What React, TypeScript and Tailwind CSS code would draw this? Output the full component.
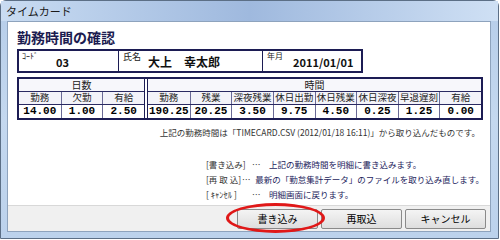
import React from 'react';

const jp = { fontFamily: '"Noto Sans CJK JP", "Noto Sans", sans-serif' };
const mono = { fontFamily: '"Liberation Mono", "Noto Sans CJK JP", monospace' };

const dayCols = [
  { label: '勤務', value: '14.00' },
  { label: '欠勤', value: '1.00' },
  { label: '有給', value: '2.50' },
];

const timeCols = [
  { label: '勤務', value: '190.25' },
  { label: '残業', value: '20.25' },
  { label: '深夜残業', value: '3.50' },
  { label: '休日出勤', value: '9.75' },
  { label: '休日残業', value: '4.50' },
  { label: '休日深夜', value: '0.25' },
  { label: '早退遅刻', value: '1.25' },
  { label: '有給', value: '0.00' },
];

const legend = [
  { key: '[書き込み]', text: '上記の勤務時間を明細に書き込みます。' },
  { key: '[再 取 込]', text: '最新の「勤怠集計データ」のファイルを取り込み直します。' },
  { key: '[ ｷｬﾝｾﾙ ]', text: '明細画面に戻ります。' },
];

const Block = ({ title, cols, grid }: { title: string; cols: { label: string; value: string }[]; grid: string }) => (
  <div className="flex flex-col h-full">
    <div className="h-[13px] shrink-0 flex items-center justify-center text-[10px] leading-none text-[#222] border-b border-[#2a2a62] bg-[#f7f7fb]">
      {title}
    </div>
    <div className={`grid ${grid} h-[13px] shrink-0 border-b border-[#2a2a62] bg-[#f3f3f9]`}>
      {cols.map((c, i) => (
        <div
          key={i}
          className={`flex items-center justify-center whitespace-nowrap text-[9.5px] leading-none text-[#222] ${i > 0 ? 'border-l border-[#6a6a96]' : ''}`}
        >
          {c.label}
        </div>
      ))}
    </div>
    <div className={`grid ${grid} flex-1`}>
      {cols.map((c, i) => (
        <div
          key={i}
          style={mono}
          className={`flex items-center justify-center text-[11px] font-bold leading-none text-black ${i > 0 ? 'border-l border-[#6a6a96]' : ''}`}
        >
          {c.value}
        </div>
      ))}
    </div>
  </div>
);

const Btn = ({ label }: { label: string }) => (
  <button className="w-[81px] h-[20px] rounded-[2px] border border-[#8a8a8a] bg-gradient-to-b from-[#f4f4f4] to-[#dedede] text-[10px] leading-none text-black">
    {label}
  </button>
);

const App = () => {
  return (
    <div style={jp} className="relative w-[500px] h-[240px] overflow-hidden bg-white">
      <div className="w-[499px] h-[239px] rounded-t-[6px] border border-[#5c6f86] bg-gradient-to-b from-[#b6cde9] via-[#c4d8ef] to-[#bcd2ec] flex flex-col">
        <div className="h-[20px] shrink-0 flex items-center px-[5px] bg-gradient-to-r from-[#c9dcf2] via-[#9fb9de] to-[#cfe0f4]">
          <span className="text-[11px] text-[#1a1a1a] leading-[14px]">タイムカード</span>
        </div>
        <div className="flex-1 min-h-0 ml-[6px] mr-[7px] mb-[6px] flex flex-col border border-[#8ea3bd] bg-white">
          <div className="flex-1 min-h-0 flex flex-col pl-[9px] pr-[6px]">
            <div className="pt-[6px] h-[27px] shrink-0 text-[14px] font-bold leading-[18px] text-[#1c1c50]">勤務時間の確認</div>
            <div className="flex shrink-0 w-[346px] h-[24px] border-2 border-[#1c1c54]">
              <div className="w-[99px] flex items-start pl-[3px] pt-[1px]">
                <span className="text-[8px] leading-none text-[#222]">ｺｰﾄﾞ</span>
                <span className="ml-[18px] mt-[5px] text-[11px] leading-none font-bold text-[#111]">03</span>
              </div>
              <div className="w-[144px] flex items-start border-l border-[#1c1c54] pl-[4px] pt-[1px]">
                <span className="text-[9px] leading-none text-[#222]">氏名</span>
                <span className="ml-[7px] mt-[4px] text-[12px] leading-none font-bold text-[#111]">大上　幸太郎</span>
              </div>
              <div className="flex-1 flex items-start border-l border-[#1c1c54] pl-[4px] pt-[1px]">
                <span className="text-[8px] leading-none text-[#222]">年月</span>
                <span className="ml-[10px] mt-[5px] text-[11px] leading-none font-bold text-[#111]">2011/01/01</span>
              </div>
            </div>
            <div className="mt-[4px] shrink-0 flex w-[466px] h-[43px] border-2 border-[#1c1c54]">
              <div className="w-[125px]">
                <Block title="日数" cols={dayCols} grid="grid-cols-3" />
              </div>
              <div className="w-[4px] border-x border-[#1c1c54] bg-white" />
              <div className="flex-1">
                <Block title="時間" cols={timeCols} grid="grid-cols-8" />
              </div>
            </div>
            <div className="mt-[7px] shrink-0 pr-[4px] text-right whitespace-nowrap text-[8.5px] leading-[10px] text-[#333]">
              上記の勤務時間は「TIMECARD.CSV (2012/01/18 16:11)」から取り込んだものです。
            </div>
            <div className="mt-[22px] shrink-0 pl-[189px] flex flex-col gap-[5px]">
              {legend.map((l, i) => (
                <div key={i} className="flex items-center whitespace-nowrap text-[8.5px] leading-[10px]">
                  <span className="w-[46px] text-[#333]">{l.key}</span>
                  <span className="w-[17px] text-[#333]">…</span>
                  <span className="text-[#1c1c5c]">{l.text}</span>
                </div>
              ))}
            </div>
          </div>
          <div className="h-[26px] shrink-0 border-t border-[#d8d8d8] bg-[#f0f0f0] flex items-center justify-end gap-[3px] pr-[4px]">
            <Btn label="書き込み" />
            <Btn label="再取込" />
            <Btn label="キャンセル" />
          </div>
        </div>
      </div>
      <div className="absolute left-[226px] top-[203px] w-[99px] h-[30px] rounded-[50%] border-[3px] border-[#e01818]" />
    </div>
  );
};

export default App;
